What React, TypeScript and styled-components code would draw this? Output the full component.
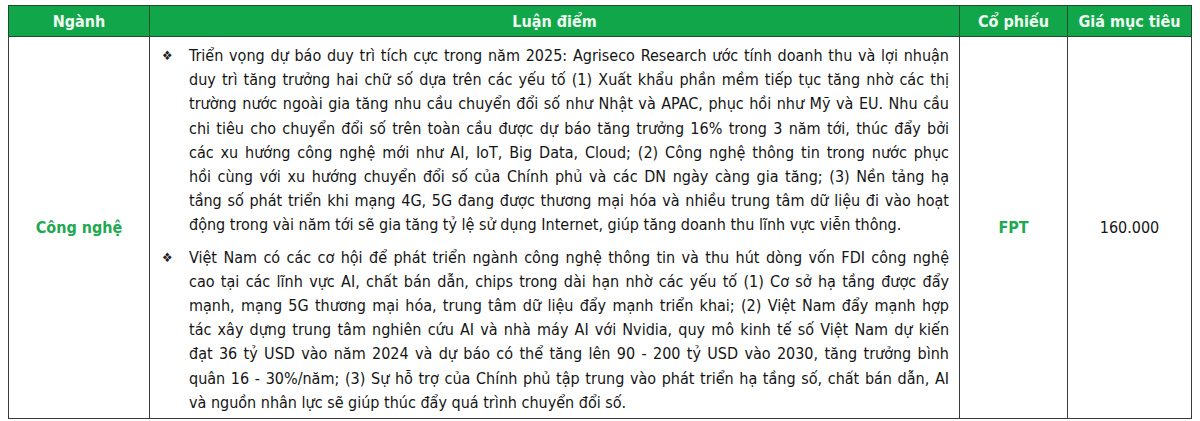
import React from 'react';
import styled, { createGlobalStyle } from 'styled-components';

const GlobalStyle = createGlobalStyle`
  html, body {
    margin: 0;
    padding: 0;
    background: #ffffff;
  }
  body {
    font-family: 'DejaVu Sans', 'Liberation Sans', sans-serif;
    font-stretch: condensed;
  }
`;

const Page = styled.div`
  padding: 5px 0 0 8px;
  width: 1200px;
  box-sizing: border-box;
`;

const Table = styled.table`
  width: 1179px;
  border-collapse: collapse;
  table-layout: fixed;
  font-family: 'DejaVu Sans Condensed', 'DejaVu Sans', sans-serif;
  font-stretch: condensed;
  font-size: 16px;
  color: #151515;
`;

const HeadCell = styled.th<{ $w: number }>`
  width: ${(p) => p.$w}px;
  height: 30px;
  padding: 0;
  background: #12a64b;
  color: #eefbf1;
  font-weight: bold;
  font-size: 16px;
  text-align: center;
  vertical-align: middle;
  border: 1.5px solid #1d4d2c;
`;

const Cell = styled.td<{ $green?: boolean; $bold?: boolean }>`
  padding: 0;
  text-align: center;
  vertical-align: middle;
  border: 1.5px solid #3a3a3a;
  color: ${(p) => (p.$green ? '#22a852' : '#151515')};
  font-weight: ${(p) => (p.$bold ? 'bold' : 'normal')};
`;

const PointsCell = styled.td`
  padding: 7px 10px 3px 12px;
  vertical-align: top;
  border: 1.5px solid #3a3a3a;
`;

const Point = styled.div`
  display: grid;
  grid-template-columns: 27px 1fr;
  & + & {
    margin-top: 8px;
  }
`;

const Bullet = styled.span`
  font-size: 13px;
  line-height: 24.2px;
  color: #222;
`;

const Line = styled.div<{ $last?: boolean }>`
  line-height: 24.2px;
  white-space: nowrap;
  text-align: ${(p) => (p.$last ? 'left' : 'justify')};
  text-align-last: ${(p) => (p.$last ? 'left' : 'justify')};
`;

const points: string[][] = [
  [
    'Triển vọng dự báo duy trì tích cực trong năm 2025: Agriseco Research ước tính doanh thu và lợi nhuận',
    'duy trì tăng trưởng hai chữ số dựa trên các yếu tố (1) Xuất khẩu phần mềm tiếp tục tăng nhờ các thị',
    'trường nước ngoài gia tăng nhu cầu chuyển đổi số như Nhật và APAC, phục hồi như Mỹ và EU. Nhu cầu',
    'chi tiêu cho chuyển đổi số trên toàn cầu được dự báo tăng trưởng 16% trong 3 năm tới, thúc đẩy bởi',
    'các xu hướng công nghệ mới như AI, IoT, Big Data, Cloud; (2) Công nghệ thông tin trong nước phục',
    'hồi cùng với xu hướng chuyển đổi số của Chính phủ và các DN ngày càng gia tăng; (3) Nền tảng hạ',
    'tầng số phát triển khi mạng 4G, 5G đang được thương mại hóa và nhiều trung tâm dữ liệu đi vào hoạt',
    'động trong vài năm tới sẽ gia tăng tỷ lệ sử dụng Internet, giúp tăng doanh thu lĩnh vực viễn thông.',
  ],
  [
    'Việt Nam có các cơ hội để phát triển ngành công nghệ thông tin và thu hút dòng vốn FDI công nghệ',
    'cao tại các lĩnh vực AI, chất bán dẫn, chips trong dài hạn nhờ các yếu tố (1) Cơ sở hạ tầng được đẩy',
    'mạnh, mạng 5G thương mại hóa, trung tâm dữ liệu đẩy mạnh triển khai; (2) Việt Nam đẩy mạnh hợp',
    'tác xây dựng trung tâm nghiên cứu AI và nhà máy AI với Nvidia, quy mô kinh tế số Việt Nam dự kiến',
    'đạt 36 tỷ USD vào năm 2024 và dự báo có thể tăng lên 90 - 200 tỷ USD vào 2030, tăng trưởng bình',
    'quân 16 - 30%/năm; (3) Sự hỗ trợ của Chính phủ tập trung vào phát triển hạ tầng số, chất bán dẫn, AI',
    'và nguồn nhân lực sẽ giúp thúc đẩy quá trình chuyển đổi số.',
  ],
];

export default function App() {
  return (
    <>
      <GlobalStyle />
      <Page>
        <Table>
          <thead>
            <tr>
              <HeadCell $w={140}>Ngành</HeadCell>
              <HeadCell $w={809}>Luận điểm</HeadCell>
              <HeadCell $w={107}>Cổ phiếu</HeadCell>
              <HeadCell $w={123}>Giá mục tiêu</HeadCell>
            </tr>
          </thead>
          <tbody>
            <tr>
              <Cell $green $bold>Công nghệ</Cell>
              <PointsCell>
                {points.map((lines, i) => (
                  <Point key={i}>
                    <Bullet>❖</Bullet>
                    <div>
                      {lines.map((l, j) => (
                        <Line key={j} $last={j === lines.length - 1}>
                          {l}
                        </Line>
                      ))}
                    </div>
                  </Point>
                ))}
              </PointsCell>
              <Cell $green $bold>FPT</Cell>
              <Cell>160.000</Cell>
            </tr>
          </tbody>
        </Table>
      </Page>
    </>
  );
}
